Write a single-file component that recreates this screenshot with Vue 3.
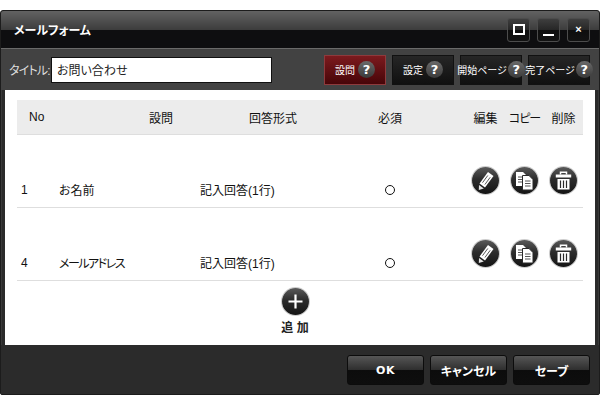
<template>
  <div class="page">
    <div class="window">
      <div class="title-bar">
        <span class="title">メールフォーム</span>
        <div class="win-btns">
          <button class="win-btn"><span class="ico-max"></span></button>
          <button class="win-btn"><span class="ico-min"></span></button>
          <button class="win-btn"><span class="ico-close">×</span></button>
        </div>
      </div>

      <div class="toolbar">
        <label class="title-label">タイトル:</label>
        <input class="title-input" type="text" value="お問い合わせ" />
        <div class="tabs">
          <button
            v-for="tab in tabs"
            :key="tab.name"
            class="tab"
            :class="{ active: tab.active, tight: tab.name.length > 2 }"
          >
            <span>{{ tab.name }}</span>
            <span class="help">?</span>
          </button>
        </div>
      </div>

      <div class="content">
        <div class="table">
          <div class="row head">
            <span class="c-no head-no">No</span>
            <span class="c-q head-q">設問</span>
            <span class="c-type head-type">回答形式</span>
            <span class="c-req">必須</span>
            <span class="c-act">編集</span>
            <span class="c-act copy-head">コピー</span>
            <span class="c-act">削除</span>
          </div>
          <div class="row item" v-for="q in questions" :key="q.no">
            <span class="c-no">{{ q.no }}</span>
            <span class="c-q" :class="{ narrow: q.narrow }">{{ q.name }}</span>
            <span class="c-type">{{ q.type }}</span>
            <span class="c-req"><i class="circle"></i></span>
            <span class="c-act">
              <span class="round">
                <svg viewBox="0 0 27 27" width="27" height="27">
                  <path d="M16 5l5.500 4-8.500 11.500-5.500-4z" fill="#fff" />
                  <path d="M15.800 8.500l-5.300 7.200M18.200 10.300l-5.300 7.200" stroke="#2a2a2a" stroke-width="0.8" />
                  <path d="M7 18l4.800 3.500-5 1.500z" fill="#e4e4e4" />
                </svg>
              </span>
            </span>
            <span class="c-act">
              <span class="round">
                <svg viewBox="0 0 27 27" width="27" height="27">
                  <path d="M5 5h7l3 3v11H5z" fill="#fff" />
                  <path d="M7 10h4M7 12.500h4M7 15h4" stroke="#2a2a2a" stroke-width="0.8" />
                  <path d="M11.500 8.500H18l4 4v10.500H11.500z" fill="#fff" stroke="#2a2a2a" stroke-width="1" />
                  <path d="M14 14h5.500M14 16.500h5.500M14 19h5.500" stroke="#2a2a2a" stroke-width="0.8" />
                </svg>
              </span>
            </span>
            <span class="c-act">
              <span class="round">
                <svg viewBox="0 0 27 27" width="27" height="27">
                  <path d="M10.500 7.500V5.200h6v2.300" fill="none" stroke="#fff" stroke-width="1.500" />
                  <path d="M5.800 7.500h15.400v3H5.800z" fill="#fff" />
                  <path d="M7.500 12h12v10.500h-12z" fill="#fff" />
                  <path d="M10.500 13.500v7.500M13.500 13.500v7.500M16.500 13.500v7.500" stroke="#2a2a2a" stroke-width="1.200" />
                </svg>
              </span>
            </span>
          </div>
        </div>

        <div class="add">
          <span class="round">
            <svg viewBox="0 0 27 27" width="27" height="27">
              <path d="M13.500 6.500v14M6.500 13.500h14" stroke="#fff" stroke-width="2.200" />
            </svg>
          </span>
          <span class="add-label">追 加</span>
        </div>
      </div>

      <div class="footer">
        <button class="foot-btn ok">OK</button>
        <button class="foot-btn">キャンセル</button>
        <button class="foot-btn">セーブ</button>
      </div>
    </div>
  </div>
</template>

<script setup>
const tabs = [
  { name: '設問', active: true },
  { name: '設定', active: false },
  { name: '開始ページ', active: false },
  { name: '完了ページ', active: false },
]

const questions = [
  { no: 1, name: 'お名前', type: '記入回答(1行)' },
  { no: 4, name: 'メールアドレス', type: '記入回答(1行)', narrow: true },
]
</script>

<style scoped>
.page {
  width: 600px;
  height: 415px;
  padding-top: 10px;
  box-sizing: border-box;
  background: #fff;
  font-family: "Liberation Sans", "Noto Sans CJK JP", sans-serif;
  font-feature-settings: "palt";
  font-size: 12px;
  color: #111;
}

.window {
  height: 385px;
  box-sizing: border-box;
  display: flex;
  flex-direction: column;
  background: #2b2b2b;
  border: 1px solid #1c1c1c;
  border-radius: 3px 3px 2px 2px;
  box-shadow: inset 0 0 0 1px #3a3a3a;
}

.title-bar {
  height: 37px;
  flex: none;
  display: flex;
  align-items: center;
  justify-content: space-between;
  padding: 0 9px 0 13px;
  background: linear-gradient(#626262 0, #3c3c3c 19px, #0e0e10 19px, #0e0e10 100%);
  border-bottom: 1px solid #6a6a6a;
  border-radius: 3px 3px 0 0;
}

.title {
  color: #fff;
  font-size: 12px;
  font-weight: 700;
}

.win-btns {
  display: flex;
  gap: 7px;
}

.win-btn {
  width: 23px;
  height: 24px;
  padding: 0;
  display: flex;
  align-items: center;
  justify-content: center;
  background: linear-gradient(#3e3e3e 0, #262626 50%, #0e0e0e 50%, #121212 100%);
  border: 1px solid #4c4c4c;
  border-radius: 3px;
}

.ico-max {
  width: 8px;
  height: 7px;
  border: 2px solid #fff;
  box-sizing: content-box;
}

.ico-min {
  width: 11px;
  height: 2px;
  margin-top: 10px;
  background: #fff;
}

.ico-close {
  color: #fff;
  font-size: 11px;
  font-weight: 700;
  line-height: 1;
}

.toolbar {
  height: 41px;
  flex: none;
  display: flex;
  align-items: center;
  padding-left: 8px;
  padding-right: 9px;
  background: #424242;
}

.title-label {
  width: 42px;
  color: #ddd;
  font-size: 12px;
  letter-spacing: -0.8px;
  white-space: nowrap;
}

.title-input {
  width: 221px;
  height: 26px;
  box-sizing: border-box;
  padding: 0 5px;
  border: 1px solid #111;
  background: #fff;
  color: #222;
  font-family: inherit;
  font-feature-settings: inherit;
  font-size: 12px;
  outline: none;
}

.tabs {
  margin-left: auto;
  display: flex;
  gap: 6px;
}

.tab {
  width: 62px;
  height: 30px;
  padding: 0;
  display: flex;
  align-items: center;
  justify-content: center;
  gap: 3px;
  color: #fff;
  font-family: inherit;
  font-feature-settings: inherit;
  font-size: 10px;
  white-space: nowrap;
  background: linear-gradient(#262626, #101010);
  border: 1px solid #111;
}

.tab.tight {
  gap: 1px;
}

.tab.active {
  background: linear-gradient(#7c1a1e, #470508);
  border-color: #8e3a3c;
}

.help {
  width: 17px;
  height: 17px;
  flex: none;
  border-radius: 50%;
  background: linear-gradient(#6a6a6a, #3a3a3a);
  color: #fff;
  font-family: "DejaVu Sans", sans-serif;
  font-size: 13px;
  font-weight: 700;
  line-height: 17px;
  text-align: center;
}

.content {
  flex: 1;
  margin: 0 4px;
  padding: 10px 12px 0;
  background: #fff;
}

.table {
  width: 566px;
}

.row {
  display: grid;
  grid-template-columns: 42px 141px 150px 116px 39px 39px 39px;
  align-items: center;
  height: 73px;
  box-sizing: border-box;
  border-bottom: 1px solid #dedede;
}

.row.head {
  height: 35px;
  background: #ececec;
  text-align: center;
}

.head-no {
  text-align: left;
  padding-left: 12px;
}

.head-q {
  padding-left: 90px;
  text-align: left;
}

.head-type {
  padding-left: 49px;
  text-align: left;
}

.copy-head {
  letter-spacing: -1px;
}

.narrow {
  letter-spacing: -1.5px;
}

.item .c-no {
  padding-left: 4px;
  padding-top: 37px;
}

.item .c-q,
.item .c-type {
  padding-top: 37px;
}

.c-req {
  text-align: center;
  padding-right: 36px;
}

.item .c-req {
  padding-top: 37px;
  line-height: 0;
}

.c-act {
  text-align: center;
  white-space: nowrap;
}

.item .c-act {
  padding-top: 19px;
  line-height: 0;
}

.circle {
  display: inline-block;
  width: 10px;
  height: 10px;
  box-sizing: border-box;
  border: 1px solid #111;
  border-radius: 50%;
}

.round {
  display: inline-block;
  width: 27px;
  height: 27px;
  border-radius: 50%;
  background: linear-gradient(#5a5a5a 0, #2c2c2c 45%, #141414 100%);
  box-shadow: 0 0 0 1px #ccc;
}

.round svg {
  display: block;
}

.add {
  display: flex;
  flex-direction: column;
  align-items: center;
  gap: 3px;
  padding-top: 7px;
  padding-right: 10px;
}

.add-label {
  font-size: 12px;
  font-weight: 700;
  color: #222;
}

.footer {
  height: 49px;
  box-sizing: border-box;
  flex: none;
  display: flex;
  justify-content: flex-end;
  align-items: flex-start;
  gap: 6px;
  padding: 10px 9px 0 0;
  background: #2b2b2b;
}

.foot-btn {
  width: 77px;
  height: 30px;
  padding: 0;
  color: #fff;
  font-family: inherit;
  font-feature-settings: inherit;
  font-size: 12px;
  font-weight: 700;
  background: linear-gradient(#565656 0, #2e2e2e 50%, #0c0c0c 50%, #0e0e0e 100%);
  border: 1px solid #0c0c0c;
  border-radius: 3px;
}

.foot-btn.ok {
  font-family: "DejaVu Sans", sans-serif;
  font-size: 11px;
  letter-spacing: 0.5px;
}
</style>
